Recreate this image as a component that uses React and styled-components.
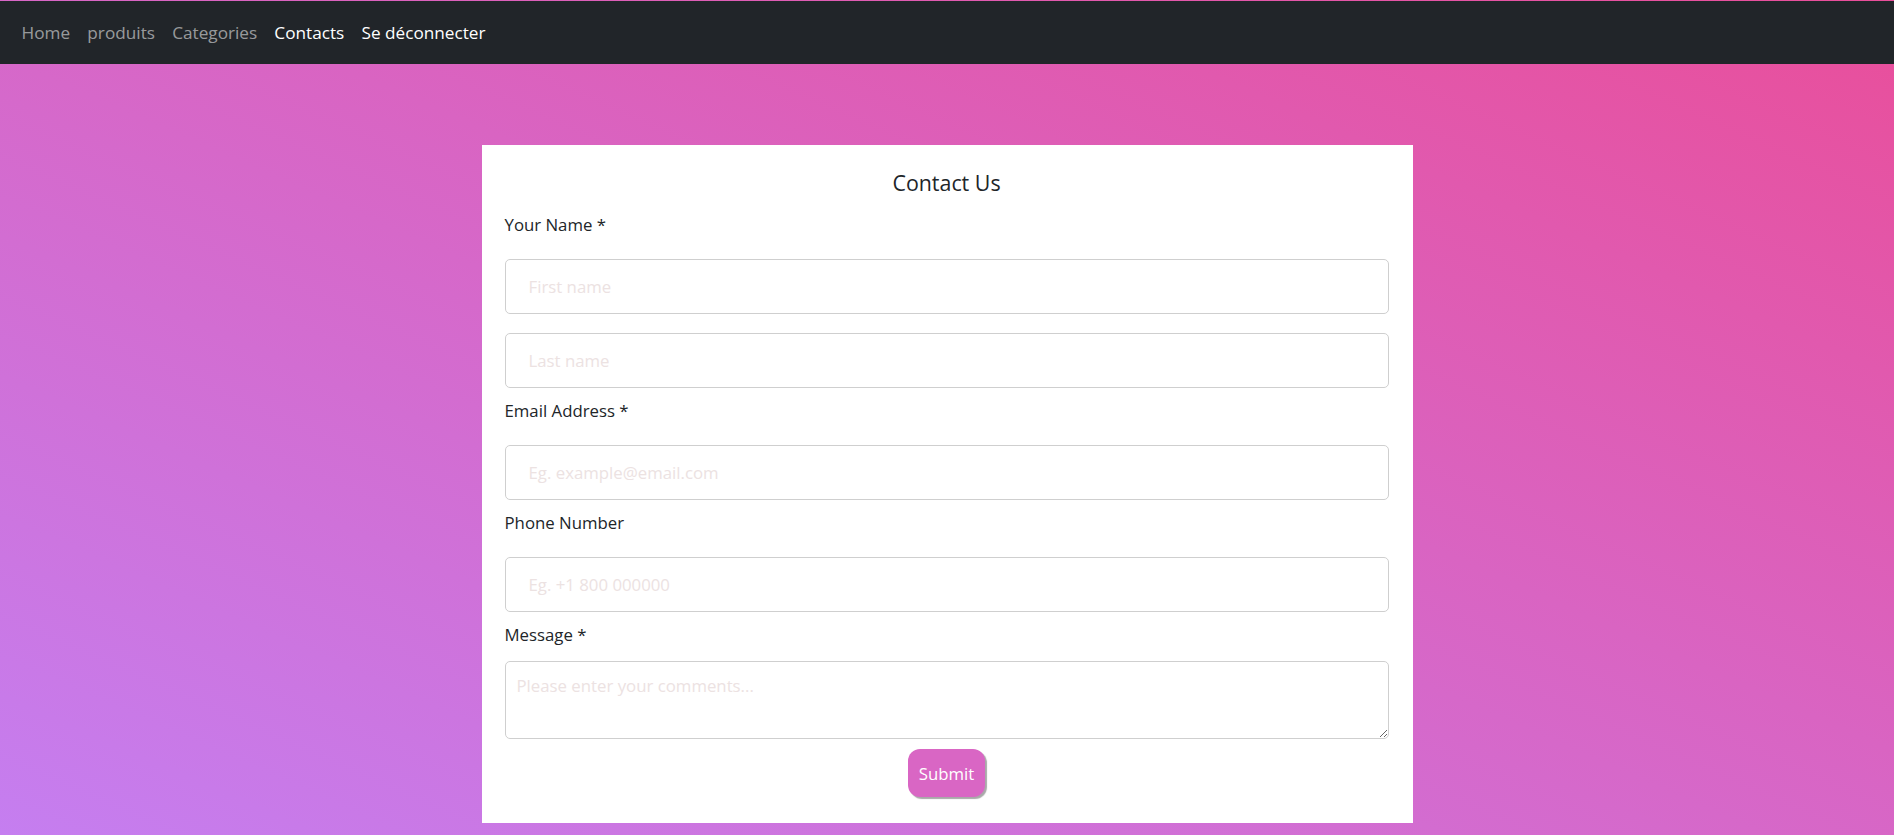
import React from "react";
import styled, { createGlobalStyle } from "styled-components";

const GlobalStyle = createGlobalStyle`
  * {
    box-sizing: border-box;
  }
  body {
    margin: 0;
    font-family: "Open Sans", "Noto Sans", Arial, sans-serif;
    font-size: 16.8px;
    color: #212529;
  }
`;

const Page = styled.div`
  min-height: 100vh;
  padding-top: 1px;
  background: linear-gradient(to top right, #c57ef0 0%, #d964c2 55%, #e94e9a 100%);
`;

const NavBar = styled.nav`
  height: 63px;
  background: #212529;
  display: flex;
  align-items: center;
  padding: 0 13px;
`;

const NavLink = styled.a`
  padding: 0 8.6px;
  font-size: 17.2px;
  color: ${(p) => (p.$active ? "#ffffff" : "rgba(255, 255, 255, 0.55)")};
  text-decoration: none;
  line-height: 26px;
  cursor: pointer;
`;

const Main = styled.main`
  display: flex;
  justify-content: center;
  padding-top: 81px;
`;

const Card = styled.form`
  width: 931px;
  background: #ffffff;
  padding: 25px 24px 26px 23px;
  display: flex;
  flex-direction: column;
`;

const Title = styled.h5`
  margin: 0 0 16px;
  text-align: center;
  font-size: 21.4px;
  font-weight: 400;
  line-height: 26px;
  color: #212529;
`;

const Label = styled.label`
  display: block;
  line-height: 26px;
  margin-bottom: ${(p) => (p.$tight ? "13px" : "21px")};
`;

const Group = styled.div`
  margin-bottom: 10px;
`;

const Input = styled.input`
  display: block;
  width: 100%;
  height: 55px;
  padding: 0 23px;
  border: 1px solid #cfcfcf;
  border-radius: 5px;
  font: inherit;
  color: #212529;
  background: #fff;
  margin-bottom: ${(p) => (p.$spaced ? "19px" : "0")};
  outline: none;

  &::placeholder {
    color: #ece2e2;
  }
`;

const TextArea = styled.textarea`
  display: block;
  width: 100%;
  height: 78px;
  padding: 11px 11px 8px;
  border: 1px solid #cfcfcf;
  border-radius: 5px;
  font: inherit;
  line-height: 26px;
  color: #212529;
  resize: vertical;
  outline: none;

  &::placeholder {
    color: #ece2e2;
  }
`;

const Actions = styled.div`
  display: flex;
  justify-content: center;
`;

const SubmitButton = styled.button`
  height: 48px;
  padding: 0 11px;
  border: none;
  border-radius: 12px;
  background: #d966c4;
  color: #ffffff;
  font: inherit;
  box-shadow: 2px 2px 1px #a9a9a9;
  cursor: pointer;
`;

const links = [
  { label: "Home" },
  { label: "produits" },
  { label: "Categories" },
  { label: "Contacts", active: true },
  { label: "Se déconnecter", active: true },
];

export default function App() {
  return (
    <>
      <GlobalStyle />
      <Page>
        <NavBar>
          {links.map((l) => (
            <NavLink key={l.label} $active={l.active}>
              {l.label}
            </NavLink>
          ))}
        </NavBar>
        <Main>
          <Card onSubmit={(e) => e.preventDefault()}>
            <Title>Contact Us</Title>
            <Group>
              <Label>Your Name *</Label>
              <Input $spaced placeholder="First name" />
              <Input placeholder="Last name" />
            </Group>
            <Group>
              <Label>Email Address *</Label>
              <Input placeholder="Eg. example@email.com" />
            </Group>
            <Group>
              <Label>Phone Number</Label>
              <Input placeholder="Eg. +1 800 000000" />
            </Group>
            <Group>
              <Label $tight>Message *</Label>
              <TextArea placeholder="Please enter your comments..." />
            </Group>
            <Actions>
              <SubmitButton type="submit">Submit</SubmitButton>
            </Actions>
          </Card>
        </Main>
      </Page>
    </>
  );
}
